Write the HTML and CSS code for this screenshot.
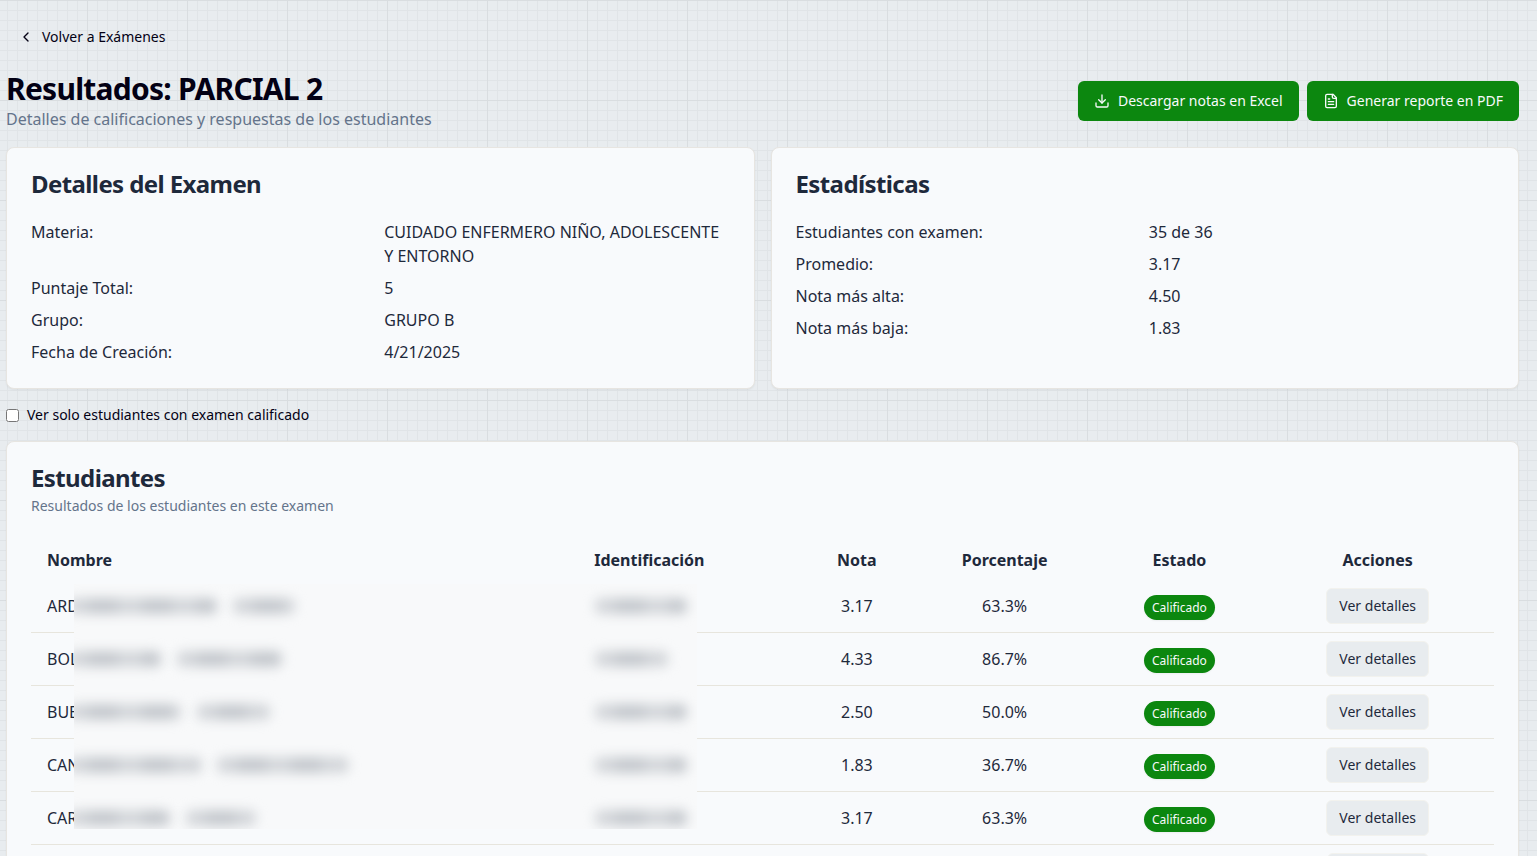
FILE: index.html
```html
<!DOCTYPE html>
<html lang="es">
<head>
<meta charset="utf-8">
<title>Resultados: PARCIAL 2</title>
<link rel="stylesheet" href="styles.css">
</head>
<body>
<main class="page">
  <a class="back" href="#">
    <svg class="icon" viewBox="0 0 24 24"><path d="m15 18-6-6 6-6"/></svg>
    Volver a Exámenes
  </a>

  <header class="page-header">
    <div>
      <h1>Resultados: PARCIAL 2</h1>
      <p class="subtitle">Detalles de calificaciones y respuestas de los estudiantes</p>
    </div>
    <div class="actions">
      <button class="btn" type="button">
        <svg class="icon" viewBox="0 0 24 24"><path d="M21 15v4a2 2 0 0 1-2 2H5a2 2 0 0 1-2-2v-4"/><path d="m7 10 5 5 5-5"/><path d="M12 15V3"/></svg>
        Descargar notas en Excel
      </button>
      <button class="btn" type="button">
        <svg class="icon" viewBox="0 0 24 24"><path d="M15 2H6a2 2 0 0 0-2 2v16a2 2 0 0 0 2 2h12a2 2 0 0 0 2-2V7Z"/><path d="M14 2v4a2 2 0 0 0 2 2h4"/><path d="M10 9H8"/><path d="M16 13H8"/><path d="M16 17H8"/></svg>
        Generar reporte en PDF
      </button>
    </div>
  </header>

  <div class="summary">
    <section class="card">
      <h2>Detalles del Examen</h2>
      <dl class="facts">
        <dt>Materia:</dt><dd>CUIDADO ENFERMERO NIÑO, ADOLESCENTE Y ENTORNO</dd>
        <dt>Puntaje Total:</dt><dd>5</dd>
        <dt>Grupo:</dt><dd>GRUPO B</dd>
        <dt>Fecha de Creación:</dt><dd>4/21/2025</dd>
      </dl>
    </section>
    <section class="card">
      <h2>Estadísticas</h2>
      <dl class="facts">
        <dt>Estudiantes con examen:</dt><dd>35 de 36</dd>
        <dt>Promedio:</dt><dd>3.17</dd>
        <dt>Nota más alta:</dt><dd>4.50</dd>
        <dt>Nota más baja:</dt><dd>1.83</dd>
      </dl>
    </section>
  </div>

  <div class="filter">
    <input type="checkbox" id="graded">
    <label for="graded">Ver solo estudiantes con examen calificado</label>
  </div>

  <section class="card">
    <h2>Estudiantes</h2>
    <p class="card-note">Resultados de los estudiantes en este examen</p>
    <div class="table-wrap">
      <table>
        <colgroup><col class="c-name"><col class="c-id"><col class="c-grade"><col class="c-pct"><col class="c-state"><col class="c-act"></colgroup>
        <thead>
          <tr><th>Nombre</th><th>Identificación</th><th>Nota</th><th>Porcentaje</th><th>Estado</th><th>Acciones</th></tr>
        </thead>
        <tbody>
          <tr><td>ARD</td><td></td><td>3.17</td><td>63.3%</td><td><span class="badge">Calificado</span></td><td><button class="btn-sm" type="button">Ver detalles</button></td></tr>
          <tr><td>BOL</td><td></td><td>4.33</td><td>86.7%</td><td><span class="badge">Calificado</span></td><td><button class="btn-sm" type="button">Ver detalles</button></td></tr>
          <tr><td>BUE</td><td></td><td>2.50</td><td>50.0%</td><td><span class="badge">Calificado</span></td><td><button class="btn-sm" type="button">Ver detalles</button></td></tr>
          <tr><td>CAN</td><td></td><td>1.83</td><td>36.7%</td><td><span class="badge">Calificado</span></td><td><button class="btn-sm" type="button">Ver detalles</button></td></tr>
          <tr><td>CAR</td><td></td><td>3.17</td><td>63.3%</td><td><span class="badge">Calificado</span></td><td><button class="btn-sm" type="button">Ver detalles</button></td></tr>
          <tr><td></td><td></td><td></td><td></td><td></td><td><button class="btn-sm" type="button" aria-label="Ver detalles"></button></td></tr>
        </tbody>
      </table>
      <!-- Privacy mask over names and identification numbers -->
      <div class="mask" aria-hidden="true">
        <div class="mask-row"><div class="bars"><i style="width:149px"></i><i style="width:62px"></i></div><div class="bars"><i style="width:92px"></i></div></div>
        <div class="mask-row"><div class="bars"><i style="width:93px"></i><i style="width:105px"></i></div><div class="bars"><i style="width:73px"></i></div></div>
        <div class="mask-row"><div class="bars"><i style="width:113px"></i><i style="width:73px"></i></div><div class="bars"><i style="width:92px"></i></div></div>
        <div class="mask-row"><div class="bars"><i style="width:133px"></i><i style="width:131px"></i></div><div class="bars"><i style="width:92px"></i></div></div>
        <div class="mask-row"><div class="bars"><i style="width:102px"></i><i style="width:70px"></i></div><div class="bars"><i style="width:92px"></i></div></div>
      </div>
    </div>
  </section>
</main>
</body>
</html>
```

FILE: styles.css
```css
* { box-sizing: border-box; }

html { scrollbar-width: none; }

body {
  margin: 0;
  min-height: 100vh;
  color: #030014;
  font-family: "Noto Sans", sans-serif;
  font-size: 16px;
  line-height: 24px;
  background-color: #e8ecef;
  background-image:
    linear-gradient(#d9dde0 1px, transparent 1px),
    linear-gradient(90deg, #d9dde0 1px, transparent 1px),
    linear-gradient(#e0e4e7 1px, transparent 1px),
    linear-gradient(90deg, #e0e4e7 1px, transparent 1px);
  background-size: 100px 100px, 100px 100px, 10px 10px, 10px 10px;
  background-position: 0 0, 87px 0, 0 0, 7px 0;
}

h1, h2, p, dl, dd { margin: 0; }

button { font-family: inherit; cursor: pointer; }

.page {
  display: flex;
  flex-direction: column;
  gap: 16px;
  padding: 19px 18px 24px 6px;
}

.icon {
  width: 16px;
  height: 16px;
  fill: none;
  stroke: currentColor;
  stroke-width: 2;
  stroke-linecap: round;
  stroke-linejoin: round;
}

.back {
  display: flex;
  align-items: center;
  align-self: flex-start;
  gap: 8px;
  height: 36px;
  padding: 0 12px;
  color: inherit;
  font-size: 14px;
  line-height: 20px;
  text-decoration: none;
}

.page-header {
  display: flex;
  align-items: center;
  justify-content: space-between;
}

h1 {
  font-size: 30px;
  line-height: 36px;
  letter-spacing: -0.025em;
}

.subtitle, .card-note { color: #64748b; }

.actions { display: flex; gap: 8px; }

.btn {
  display: flex;
  align-items: center;
  gap: 8px;
  height: 40px;
  padding: 0 16px;
  border: 0;
  border-radius: 6px;
  background: #0c870f;
  color: #f8fafc;
  font-size: 14px;
  line-height: 20px;
}

.summary {
  display: grid;
  grid-template-columns: 1fr 1fr;
  gap: 16px;
}

.card {
  padding: 24px;
  border: 1px solid #e7e5e1;
  border-radius: 8px;
  background: #f8fafc;
  color: #1e293b;
  box-shadow: 0 1px 2px rgba(0, 0, 0, 0.05);
}

h2 {
  font-size: 24px;
  line-height: 24px;
  letter-spacing: -0.025em;
}

.facts {
  display: grid;
  grid-template-columns: 1fr 1fr;
  gap: 8px;
  margin-top: 24px;
}

.filter {
  display: flex;
  align-items: center;
  gap: 8px;
  font-size: 14px;
  line-height: 20px;
}

.filter input { width: 13px; height: 13px; margin: 0; }

.card-note {
  margin-top: 6px;
  font-size: 14px;
  line-height: 20px;
}

.table-wrap { position: relative; margin-top: 24px; }

table {
  width: 100%;
  table-layout: fixed;
  border-collapse: separate;
  border-spacing: 0;
}

.c-name { width: 37.4%; }
.c-id { width: 15.3%; }
.c-grade { width: 7.5%; }
.c-pct { width: 12.7%; }
.c-state { width: 11.2%; }
.c-act { width: 15.9%; }

th { height: 40px; padding: 0 16px; font-weight: 700; text-align: center; }

td {
  height: 53px;
  padding: 0 16px;
  border-bottom: 1px solid #e7e5dd;
  text-align: center;
}

th:nth-child(-n+2), td:nth-child(-n+2) { text-align: left; }

th:nth-child(n+3), td:nth-child(n+3) { padding: 0; }

td:nth-child(5) { padding-top: 2px; }

.badge {
  display: inline-block;
  padding: 4px 8px;
  border-radius: 13px;
  background: #0c870f;
  color: #f8fafc;
  font-size: 12px;
  line-height: 17px;
  vertical-align: middle;
  box-shadow: 0 1px 2px rgba(0, 0, 0, 0.05);
}

.btn-sm {
  height: 36px;
  min-width: 102px;
  padding: 0 12px;
  border: 1px solid #f2f2ee;
  border-radius: 6px;
  background: #e8ecef;
  color: #1e293b;
  font-size: 14px;
  line-height: 20px;
  vertical-align: middle;
}

.mask {
  position: absolute;
  top: 44px;
  left: 43px;
  width: calc(52.7% - 148px);
  min-width: 623px;
  height: 245px;
  overflow: hidden;
  background: #f8f9fa;
}

.mask-row {
  display: grid;
  grid-template-columns: 521px 1fr;
  align-items: center;
  height: 44px;
  margin-bottom: 9px;
}

.bars { display: flex; gap: 16px; }

.bars:first-child { margin-left: -6px; }

.bars i {
  height: 16px;
  border-radius: 6px;
  background: repeating-linear-gradient(90deg, #d3d6da 0 16px, #c5c9ce 24px 46px, #d3d6da 54px);
  filter: blur(6px);
}
```
